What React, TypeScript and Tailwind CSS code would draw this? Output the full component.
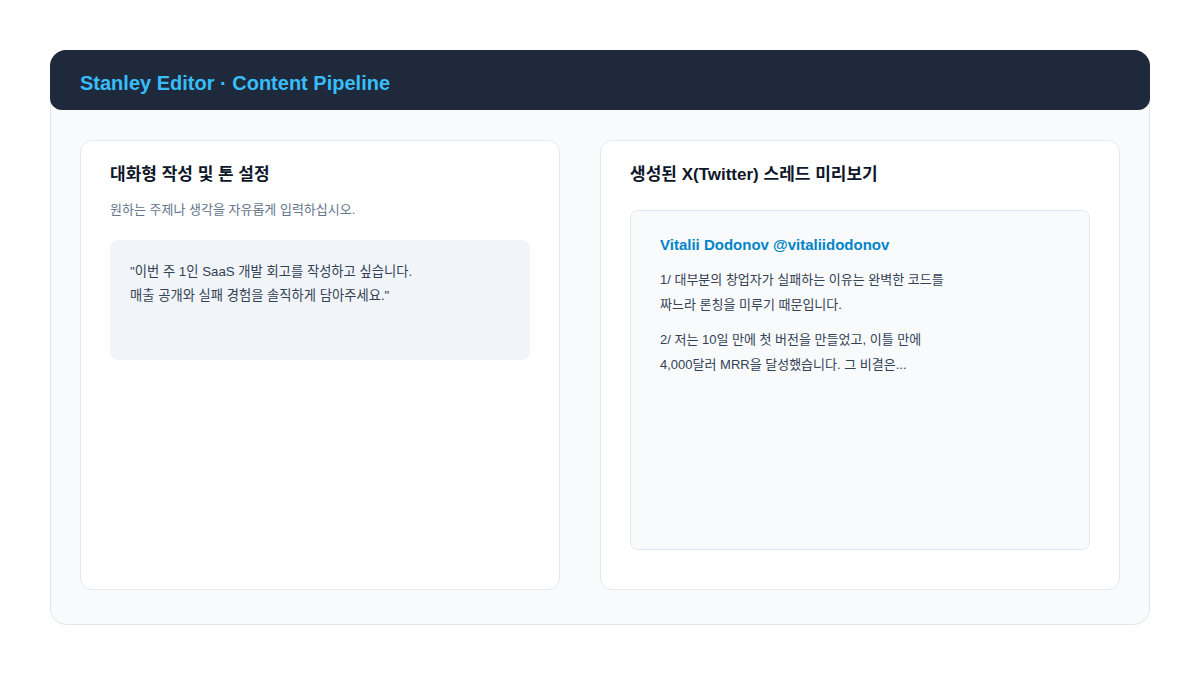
import React from "react";

const FONT = '"Liberation Sans", Arial, "Noto Sans CJK KR", sans-serif';

function PromptCard() {
  return (
    <section className="h-[450px] rounded-xl border border-[#e2e8f0] bg-white px-[29px] pt-[24px]">
      <h2 className="text-[17px] font-bold leading-[20px] text-[#0f172a]">대화형 작성 및 톤 설정</h2>
      <p className="mt-[15px] text-[13px] leading-[20px] text-[#64748b]">원하는 주제나 생각을 자유롭게 입력하십시오.</p>
      <div className="mt-[20px] h-[120px] rounded-lg bg-[#f1f5f9] px-[20px] py-[20px] text-[13.3px] leading-[24px] text-[#334155]">
        <p>"이번 주 1인 SaaS 개발 회고를 작성하고 싶습니다.</p>
        <p>매출 공개와 실패 경험을 솔직하게 담아주세요."</p>
      </div>
    </section>
  );
}

function ThreadPreview() {
  return (
    <section className="h-[450px] rounded-xl border border-[#e2e8f0] bg-white px-[29px] pt-[24px]">
      <h2 className="text-[17px] font-bold leading-[20px] text-[#0f172a]">생성된 X(Twitter) 스레드 미리보기</h2>
      <div className="mt-[25px] h-[340px] rounded-lg border border-[#e2e8f0] bg-[#f8fafc] px-[29px] pt-[24px]">
        <div className="mb-[12px] text-[15px] font-bold leading-[20px] text-[#0284c7]">Vitalii Dodonov @vitaliidodonov</div>
        <div className="text-[13px] leading-[25px] text-[#334155]">
          <p className="mb-[10px]">
            1/ 대부분의 창업자가 실패하는 이유는 완벽한 코드를
            <br />
            짜느라 론칭을 미루기 때문입니다.
          </p>
          <p>
            2/ 저는 10일 만에 첫 버전을 만들었고, 이틀 만에
            <br />
            4,000달러 MRR을 달성했습니다. 그 비결은...
          </p>
        </div>
      </div>
    </section>
  );
}

export default function App() {
  return (
    <div className="min-h-screen w-full bg-white pt-[50px] px-[50px]" style={{ fontFamily: FONT }}>
      <div className="h-[575px] w-[1100px] rounded-2xl border border-[#e2e8f0] bg-[#f8fafc]">
        <header className="-mx-px -mt-px flex h-[60px] items-center rounded-t-2xl rounded-b-xl bg-[#1e293b] px-[30px] pt-[6px]">
          <h1 className="text-[20px] font-bold text-[#38bdf8]">Stanley Editor · Content Pipeline</h1>
        </header>
        <div className="grid grid-cols-[480px_520px] gap-[40px] px-[29px] pt-[30px]">
          <PromptCard />
          <ThreadPreview />
        </div>
      </div>
    </div>
  );
}
